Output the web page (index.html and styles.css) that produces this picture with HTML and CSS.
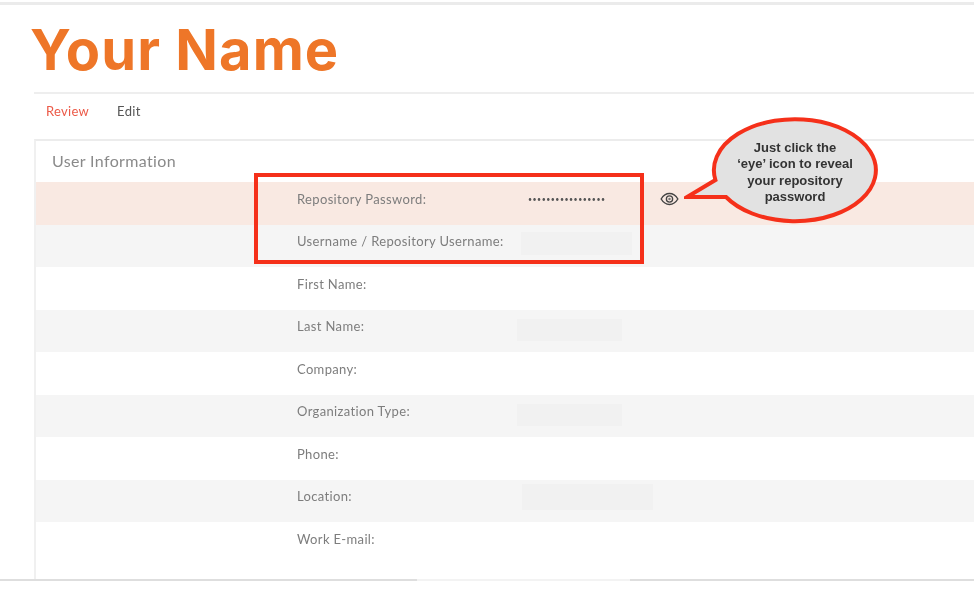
FILE: index.html
```html
<!DOCTYPE html>
<html lang="en">
<head>
<meta charset="utf-8">
<title>Your Name</title>
<link rel="stylesheet" href="styles.css">
</head>
<body>
<div class="page">
  <div class="topline"></div>
  <h1 class="title">Your Name</h1>
  <main class="content">
    <nav class="tabs">
      <a class="tab active">Review</a>
      <a class="tab">Edit</a>
    </nav>
    <section class="card">
      <h2 class="card-title">User Information</h2>
      <div class="row peach"><span class="label">Repository Password:</span><span class="value dots">•••••••••••••••••</span>
        <svg class="eye" viewBox="0 0 20 14" aria-hidden="true"><path d="M1.2 7C3.5 3.2 6.5 1.3 10 1.3S16.5 3.2 18.8 7C16.5 10.8 13.5 12.7 10 12.7S3.500 10.8 1.2 7Z" fill="none" stroke="#444" stroke-width="1.500"/><circle cx="10" cy="7" r="3.300" fill="none" stroke="#444" stroke-width="1.400"/><circle cx="10" cy="7" r="1.300" fill="#777"/></svg>
      </div>
      <div class="row grey"><span class="label">Username / Repository Username:</span><span class="patch p-user"></span></div>
      <div class="row"><span class="label">First Name:</span></div>
      <div class="row grey"><span class="label">Last Name:</span><span class="patch p-short"></span></div>
      <div class="row"><span class="label">Company:</span></div>
      <div class="row grey"><span class="label">Organization Type:</span><span class="patch p-short"></span></div>
      <div class="row"><span class="label">Phone:</span></div>
      <div class="row grey"><span class="label">Location:</span><span class="patch p-loc"></span></div>
      <div class="row last"><span class="label">Work E-mail:</span></div>
    </section>
  </main>
  <div class="bottomline"><span class="gap"></span></div>
  <div class="redbox"></div>
  <div class="callout">
    <svg class="bubble" viewBox="0 0 200 115" aria-hidden="true"><path d="M31.4 66A81 51 0 1 1 42 83L3 83Z" fill="#e2e2e2" stroke="#f5301a" stroke-width="4" stroke-linejoin="miter"/></svg>
    <p class="callout-text">Just click the<br>‘eye’ icon to reveal<br>your repository<br>password</p>
  </div>
</div>
</body>
</html>
```
FILE: styles.css
```css
* { box-sizing: border-box; }
html, body { margin: 0; padding: 0; background: #fff; }
body { font-family: "Lato", "Liberation Sans", sans-serif; overflow: hidden; }
.page { position: relative; width: 974px; height: 589px; overflow: hidden; background: #fff; }
.topline { height: 3px; margin-top: 2px; background: #ebebeb; filter: blur(.5px); }
.title {
  margin: 0; padding-left: 30px; height: 87px; padding-top: 13px;
  font-family: "Inter", "Liberation Sans", sans-serif;
  font-size: 56px; line-height: 64px; font-weight: 700; color: #ee7628;
  letter-spacing: 1.050px; filter: blur(.6px);
}
.content { margin-left: 34px; }
.tabs { display: flex; height: 47px; border-top: 2px solid #eeeeee; align-items: center; padding: 0 0 11px 12px; gap: 28px; }
.tab { font-size: 13px; letter-spacing: .3px; color: #555; filter: blur(.7px); }
.tab.active { color: #ec5a48; }
.card { border-top: 2px solid #ececec; border-left: 2px solid #f0f0f0; height: 441px; }
.card-title { margin: 0; height: 41px; padding: 10px 0 0 16px; font-size: 16px; line-height: 20px; font-weight: 400; letter-spacing: .35px; color: #8a8a8a; filter: blur(.7px); }
.row { display: flex; align-items: center; height: 42.500px; padding: 0 0 8px 261px; position: relative; }
.row.grey { background: #f5f5f5; }
.row.peach { background: #f9e9e2; }
.row.last { height: 57px; align-items: flex-start; padding-top: 8px; }
.label { font-size: 13px; line-height: 17px; letter-spacing: .35px; color: #7d7d7d; filter: blur(.7px); }
.row.last .label { line-height: 18px; }
.value { position: absolute; left: 492px; }
.dots { font-size: 7px; letter-spacing: .5px; color: #555; filter: blur(.5px); }
.eye { position: absolute; left: 624px; top: 10px; width: 19px; height: 14px; filter: blur(.4px); }
.patch { position: absolute; background: #f1f1f1; }
.p-user { left: 485px; top: 7px; width: 111px; height: 23px; }
.p-short { left: 481px; top: 9px; width: 105px; height: 22px; }
.p-loc { left: 486px; top: 4px; width: 131px; height: 26px; }
.bottomline { position: absolute; left: 0; right: 0; top: 579px; height: 2px; background: #dedede; filter: blur(.4px); }
.gap { position: absolute; left: 417px; width: 213px; top: 0; height: 2px; background: #f3f3f3; }
.redbox { position: absolute; left: 254px; top: 173px; width: 390px; height: 91px; border: 4px solid #f5301a; filter: blur(.5px); }
.callout { position: absolute; left: 684px; top: 114px; width: 200px; height: 115px; filter: blur(.5px); }
.bubble { display: block; width: 200px; height: 115px; }
.callout-text { position: absolute; left: 31px; top: 26px; width: 160px; margin: 0; text-align: center; font-family: "Liberation Sans", sans-serif; font-size: 13px; line-height: 16.400px; font-weight: 700; color: #333; }
```
